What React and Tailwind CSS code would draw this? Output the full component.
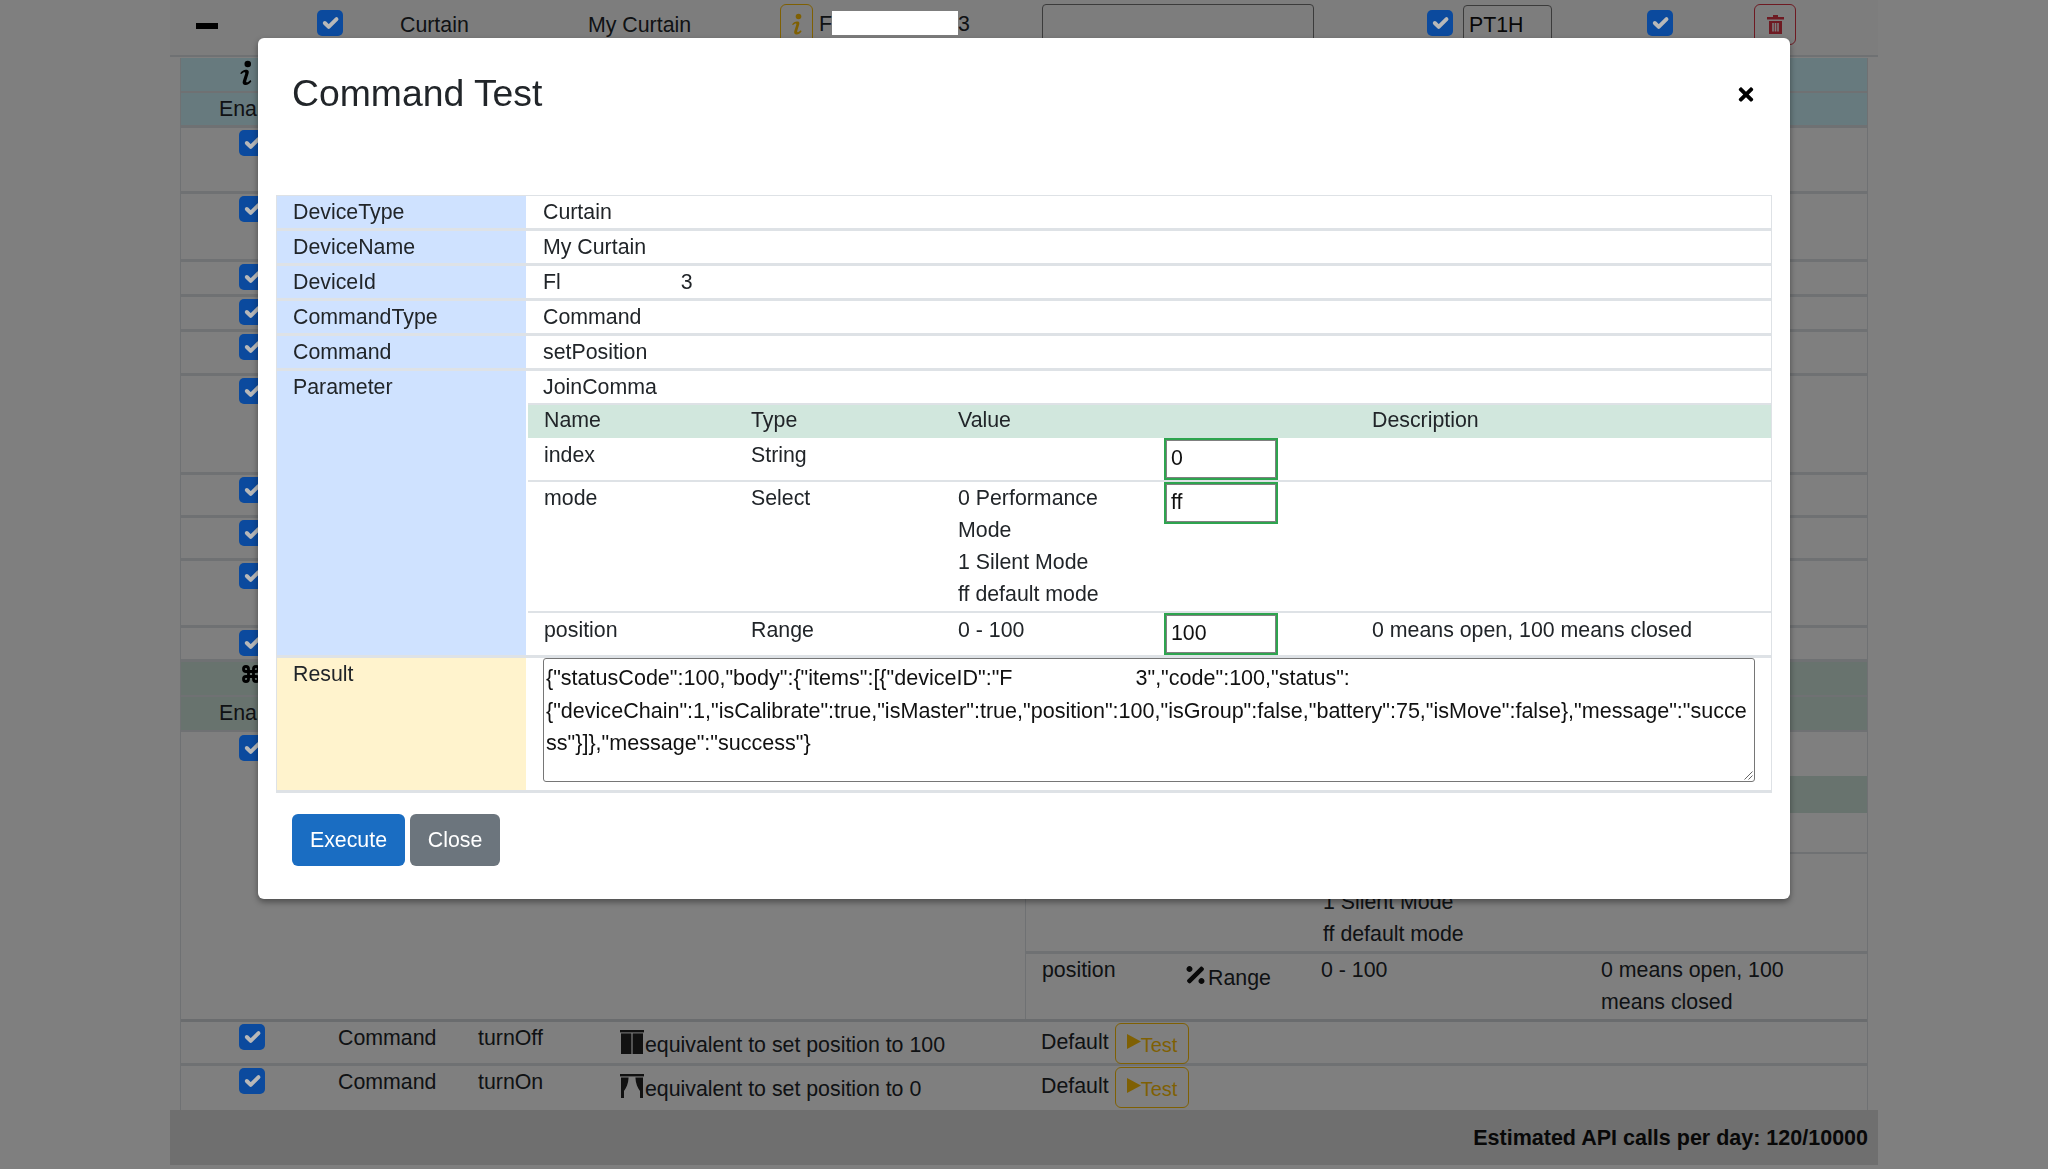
import React from "react";
import { FaTimes, FaPercentage } from "react-icons/fa";
import { Command } from "lucide-react";

const Check = ({ className = "" }) => (
  <span className={"relative z-20 flex h-[26px] w-[26px] shrink-0 items-center justify-center rounded-[5px] bg-[#0b4a9e] " + className}>
    <svg viewBox="0 0 20 20" className="h-[26px] w-[26px]" fill="none" stroke="#b8b8b8" strokeWidth="3" strokeLinecap="round" strokeLinejoin="round">
      <path d="M6 10l3 3l6-6" />
    </svg>
  </span>
);

const InfoIcon = ({ className = "" }) => (
  <svg viewBox="0 0 12 24" className={className} fill="currentColor">
    <circle cx="7.5" cy="3.5" r="2.8" />
    <path d="M1 11.5C2.5 9 5 8 7.2 8.6c1.2.4 1.4 1.6 1 3l-2 6.4c-.3 1.2.7 1.4 1.6.8l2-1.6.8 1c-1.6 2.4-3.6 3.6-5.6 3.2-1.7-.3-2.2-1.6-1.7-3.3l2-6.4c.3-1.2-.6-1.5-1.5-.9L2 11.9z" />
  </svg>
);

const TrashIcon = () => (
  <svg viewBox="0 0 17 19" className="h-[19px] w-[17px]" fill="currentColor">
    <path d="M6 0h5v2h6v2.4H0V2h6z" />
    <path fillRule="evenodd" d="M2 6h13v13H2zM5.2 8v8.4h1.6V8zM7.7 8v8.4h1.6V8zM10.2 8v8.4h1.6V8z" />
  </svg>
);

const CurtainClosed = () => (
  <svg viewBox="0 0 24 24" className="h-[24px] w-[24px] shrink-0 text-[#222]" fill="currentColor">
    <rect x="0" y="0" width="24" height="2.4" />
    <rect x="1" y="3.4" width="10.4" height="20.6" />
    <rect x="12.6" y="3.4" width="10.4" height="20.6" />
  </svg>
);

const CurtainOpen = () => (
  <svg viewBox="0 0 24 24" className="h-[24px] w-[24px] shrink-0 text-[#222]" fill="currentColor">
    <rect x="0" y="0" width="24" height="2.4" />
    <path d="M1 3.4h7.6c-.2 6-2.4 10.6-4.6 13.6v7H1z" />
    <path d="M23 3.4h-7.6c.2 6 2.4 10.6 4.6 13.6v7h3z" />
  </svg>
);

const TestButton = () => (
  <span className="mt-[1px] flex h-[41px] w-[74px] shrink-0 items-center justify-center rounded-[6px] border border-[#ffc107] text-[#ffc107]">
    <svg viewBox="0 0 14 15" className="mb-[5px] h-[15px] w-[14px] shrink-0" fill="currentColor"><path d="M0 0l14 7.5-14 7.5z" /></svg>
    <span className="mt-[3px] text-[20px]">Test</span>
  </span>
);

const LeftRow = ({ h }) => (
  <div className="flex border-b-[3px] border-[#dee2e6] pl-[58px]" style={{ height: h }}>
    <Check className="mt-[2px]" />
  </div>
);

const CommandRow = ({ name, icon, desc, last }) => (
  <div className={"flex h-[44px] items-start border-[#dee2e6] " + (last ? "" : "border-b-[3px]")}>
    <div className="w-[157px] pl-[58px] pt-[2px]"><Check /></div>
    <div className="w-[140px]">Command</div>
    <div className="w-[142px]">{name}</div>
    <div className="flex w-[421px] items-start pt-[7px]">
      <span className="mt-[1px]">{icon}</span>
      <span className="ml-[1px]">{desc}</span>
    </div>
    <div className="w-[74px] pt-[4px]">Default</div>
    <TestButton />
  </div>
);

const Row = ({ label, children }) => (
  <div className="box-border flex h-[35px] border-b-[3px] border-[#dee2e6]">
    <div className="w-[249px] bg-[#cfe2ff] pl-[16px]">{label}</div>
    <div className="ml-[2px] flex-1 pl-[15px]">{children}</div>
  </div>
);

const FieldInput = ({ value }) => (
  <div className="box-border h-[42px] w-[114px] border-2 border-[#2ea44f]">
    <div className="box-border h-full border-[1.5px] border-[#808080] pl-[4px] pt-[1px] leading-[32px] text-[#111]">
      {value}
    </div>
  </div>
);

const SubRow = ({ name, type, value, input, desc, className = "", h, pt = "" }) => (
  <div className={"flex items-start border-[#dee2e6] " + className} style={{ height: h }}>
    <div className={"w-[207px] pl-[16px] " + pt}>{name}</div>
    <div className={"w-[207px] pl-[16px] " + pt}>{type}</div>
    <div className={"w-[207px] pl-[16px] " + pt}>{value}</div>
    <div className="w-[207px] pl-[15px]">{input}</div>
    <div className={"pl-[16px] " + pt}>{desc}</div>
  </div>
);

export default function App() {
  return (
    <div className="relative h-[1169px] w-[2048px] overflow-hidden bg-white font-['Liberation_Sans',Arial,sans-serif] text-[21.33px] leading-[32px] text-[#212529]">
      {/* Page behind the dialog */}
      <div className="mx-auto w-[1708px]">
        <div className="flex h-[57px] items-start border-b-[2px] border-[#dee2e6] bg-[#fbfbfb] pt-[4px]">
          <div className="w-[147px] pl-[26px] pt-[19px]"><div className="h-[6px] w-[22px] bg-black" /></div>
          <div className="w-[83px] pt-[6px]"><Check /></div>
          <div className="w-[188px] pt-[5px]">Curtain</div>
          <div className="w-[192px] pt-[5px]">My Curtain</div>
          <div className="flex h-[41px] w-[33px] items-center justify-center rounded-[6px] border border-[#ffc107] text-[#ffc107]">
            <InfoIcon className="h-[24px] w-[12px]" />
          </div>
          <div className="ml-[6px] flex w-[223px] items-start pt-[4px]">
            F
            <span className="relative z-20 mt-[3px] h-[24px] w-[126px] shrink-0 bg-white" />
            3
          </div>
          <div className="h-[60px] w-[272px] rounded-[4px] border border-[#767676]" />
          <div className="ml-[113px] pt-[6px]"><Check /></div>
          <div className="ml-[10px] mt-[1px] h-[60px] w-[89px] rounded-[4px] border border-[#767676] pl-[5px] pt-[3px] text-[#111]">PT1H</div>
          <div className="ml-[95px] pt-[6px]"><Check /></div>
          <div className="ml-[81px] flex h-[41px] w-[42px] items-center justify-center rounded-[6px] border border-[#dc3545] text-[#dc3545]">
            <TrashIcon />
          </div>
        </div>

        <div className="mx-[10px]">
          <div className="h-[1px]" />
          <div className="border-x border-[#dee2e6]">
            <div className="relative h-[35px] border-b-[2px] border-[#dee2e6] bg-[#cff4fc]">
              <InfoIcon className="absolute left-[58px] top-[2px] h-[28px] w-[14px] text-black" />
            </div>
            <div className="h-[35px] border-b-[3px] border-[#dee2e6] bg-[#cff4fc] pl-[38px]">Enabled</div>
            <LeftRow h={66} />
            <LeftRow h={68} />
            <LeftRow h={35} />
            <LeftRow h={35} />
            <LeftRow h={44} />
            <LeftRow h={99} />
            <LeftRow h={43} />
            <LeftRow h={43} />
            <LeftRow h={67} />
            <LeftRow h={34} />

            <div className="flex h-[35px] border-b-[2px] border-[#dee2e6] bg-[#d1e7dd] pl-[59px] pt-[2px]">
              <Command strokeWidth={3.4} className="ml-[1px] h-[20px] w-[20px] text-black" />
            </div>
            <div className="h-[35px] border-b-[2px] border-[#dee2e6] bg-[#d1e7dd] pl-[38px]">Enabled</div>

            <div className="flex h-[290px] border-b-[3px] border-[#d5d8dc]">
              <div className="w-[844px] pl-[58px] pt-[3px]"><Check /></div>
              <div className="flex-1 border-l border-[#dee2e6]">
                <div className="h-[44px]" />
                <div className="h-[37px] bg-[#d1e7dd]" />
                <div className="h-[41px] border-b-[2px] border-[#dee2e6]" />
                <div className="flex h-[100px] border-b-[3px] border-[#dee2e6] pl-[297px]">
                  <div>
                    <div>0 Performance Mode</div>
                    <div>1 Silent Mode</div>
                    <div>ff default mode</div>
                  </div>
                </div>
                <div className="flex h-[65px] pl-[16px]">
                  <div className="w-[142px]">position</div>
                  <div className="flex w-[137px] items-start pt-[8px]">
                    <FaPercentage className="mr-[1px] mt-[1px] h-[24px] w-[23px] shrink-0 text-[#111]" />
                    Range
                  </div>
                  <div className="w-[280px]">0 - 100</div>
                  <div className="w-[200px]">0 means open, 100 means closed</div>
                </div>
              </div>
            </div>

            <CommandRow name="turnOff" icon={<CurtainClosed />} desc="equivalent to set position to 100" />
            <CommandRow name="turnOn" icon={<CurtainOpen />} desc="equivalent to set position to 0" last />
          </div>
        </div>

        <div className="flex h-[55px] items-center justify-end bg-[#dedede] pr-[10px] text-[21.5px] font-bold text-[#111]">
          Estimated API calls per day: 120/10000
        </div>
      </div>

      {/* Backdrop */}
      <div className="fixed inset-0 z-10 bg-black/50" />

      {/* Dialog */}
      <div className="absolute left-[258px] top-[38px] z-30 h-[861px] w-[1532px] rounded-[6px] bg-white pt-[35px] shadow-[0_3px_6px_rgba(0,0,0,0.4)]">
        <div className="flex items-center justify-between pl-[34px] pr-[35px]">
          <div className="text-[37.33px] leading-[41px]">Command Test</div>
          <FaTimes className="mt-[2px] h-[21px] w-[18px] text-black" />
        </div>

        <div className="mx-[18px] mt-[81px] border-x border-t border-[#dee2e6]">
          <Row label="DeviceType">Curtain</Row>
          <Row label="DeviceName">My Curtain</Row>
          <Row label="DeviceId">
            <span className="flex">
              <span>Fl</span>
              <span className="ml-[120px]">3</span>
            </span>
          </Row>
          <Row label="CommandType">Command</Row>
          <Row label="Command">setPosition</Row>

          <div className="flex border-b-[3px] border-[#dee2e6]">
            <div className="w-[249px] bg-[#cfe2ff] pl-[16px]">Parameter</div>
            <div className="ml-[2px] flex-1">
              <div className="h-[34px] border-b-[2px] border-[#dee2e6] pl-[15px]">JoinComma</div>
              <SubRow h={33} className="bg-[#d1e7dd] leading-[31px]" name="Name" type="Type" value="Value" desc="Description" />
              <SubRow h={44} pt="pt-[1px]" className="border-b-[2px]" name="index" type="String" input={<FieldInput value="0" />} />
              <SubRow h={131} className="border-b-[2px]" name="mode" type="Select" value={<>0 Performance<br />Mode<br />1 Silent Mode<br />ff default mode</>} input={<FieldInput value="ff" />} />
              <SubRow h={42} pt="pt-[1px]" name="position" type="Range" value="0 - 100" input={<FieldInput value="100" />} desc="0 means open, 100 means closed" />
            </div>
          </div>

          <div className="flex h-[135px] border-b-[3px] border-[#dee2e6]">
            <div className="w-[249px] bg-[#fff3cd] pl-[16px]">Result</div>
            <div className="ml-[2px] flex-1 pl-[15px]">
              <div className="relative box-border h-[124px] w-[1212px] rounded-[3px] border border-[#767676] pl-[2px] pt-[3px] text-[21.55px] leading-[32.5px] text-[#111]">
                <div className="flex whitespace-nowrap">
                  <span>{'{"statusCode":100,"body":{"items":[{"deviceID":"F'}</span>
                  <span className="ml-[123px]">{'3","code":100,"status":'}</span>
                </div>
                <div className="whitespace-nowrap">{'{"deviceChain":1,"isCalibrate":true,"isMaster":true,"position":100,"isGroup":false,"battery":75,"isMove":false},"message":"succe'}</div>
                <div className="whitespace-nowrap">{'ss"}]},"message":"success"}'}</div>
                <svg viewBox="0 0 10 10" className="absolute bottom-[1px] right-[1px] h-[10px] w-[10px]" fill="none" stroke="#666" strokeWidth="1">
                  <path d="M9.5 1.5L1.5 9.5M9.5 5.5L5.5 9.5" />
                </svg>
              </div>
            </div>
          </div>
        </div>

        <div className="ml-[34px] mt-[21px] flex gap-[5px]">
          <button className="h-[52px] w-[113px] rounded-[6px] bg-[#1a6dc2] text-white">Execute</button>
          <button className="h-[52px] w-[90px] rounded-[6px] bg-[#6c757d] text-white">Close</button>
        </div>
      </div>
    </div>
  );
}
